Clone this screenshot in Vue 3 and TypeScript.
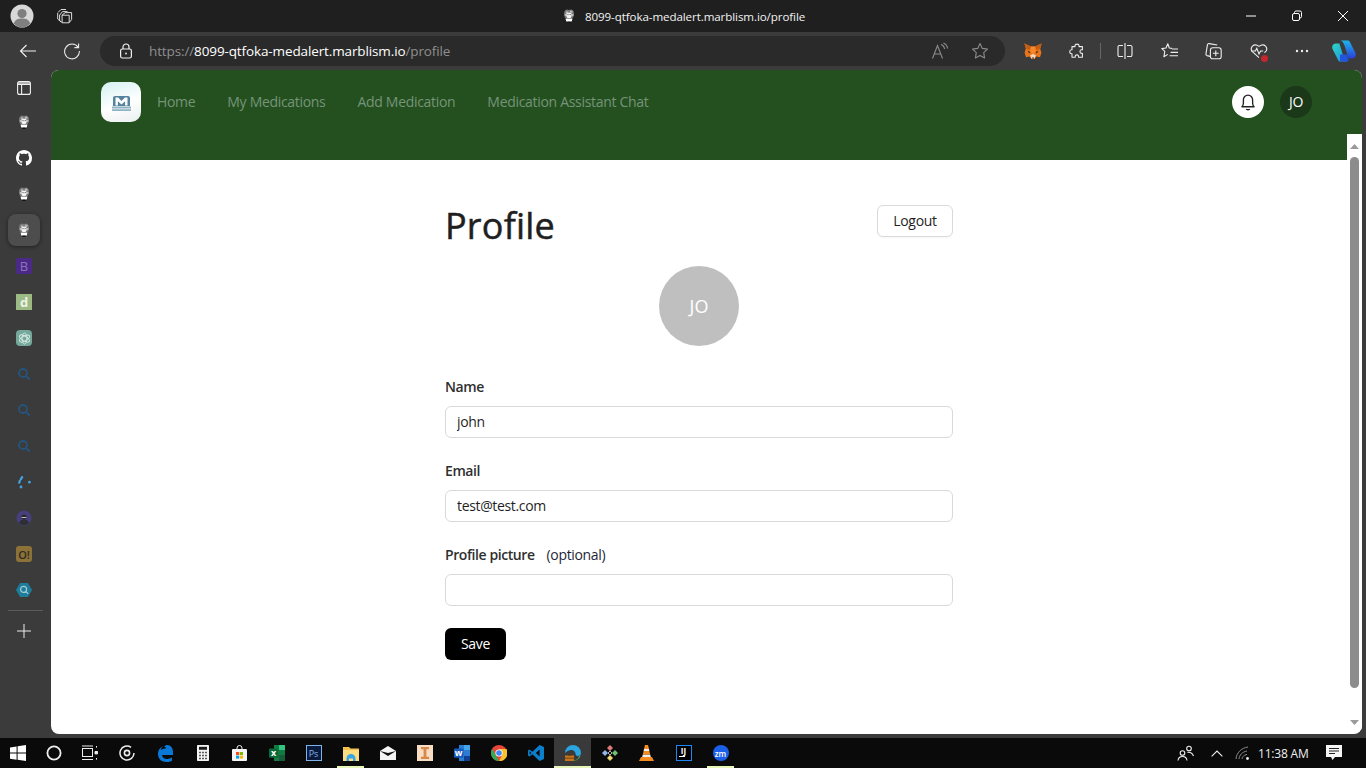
<script setup lang="ts">
const navLinks = ['Home', 'My Medications', 'Add Medication', 'Medication Assistant Chat']

const searchTabs = [0, 1, 2]
</script>

<template>
  <div class="desktop">
    <svg class="defs" width="0" height="0">
      <symbol id="bust" viewBox="0 0 12 14">
        <path d="M1.500 2 3.500.5 6 1 8.500.5 10.500 2l.5 3-.6 3-1 1.200.4 1.800H2.200l.4-1.800-1-1.200L1 5z" fill="#7c7c7c" />
        <path d="M3 2.500h2v2H3zM7 1.800h2.400v2H7zM1.800 5h1.600v2H1.800zM8.800 5h1.600v2H8.800z" fill="#bdbdbd" />
        <path d="M3.600 4.200 6 3.400l2.400.8.3 2.800L7.600 9H4.400L3.300 7z" fill="#f2f2f2" />
        <path d="M4.400 5.600h1.200M6.600 5.600h1.200" stroke="#555" stroke-width=".9" />
        <path d="M3 9.800h6v1.600l-1 1.600H4l-1-1.600z" fill="#fff" />
        <path d="M4.200 12.400h3.600V14H4.200z" fill="#161616" />
      </symbol>
      <symbol id="search-dim" viewBox="0 0 14 14">
        <circle cx="6" cy="6" r="4" fill="none" stroke="#25547d" stroke-width="1.800" />
        <path d="m9 9 3.800 3.600" stroke="#25547d" stroke-width="1.800" />
      </symbol>
    </svg>

    <!-- title bar -->
    <div class="titlebar">
      <div class="title-left">
        <svg class="profile-pic" width="24" height="24" viewBox="0 0 24 24">
          <circle cx="12" cy="12" r="11.5" fill="#d8d8d8" />
          <circle cx="12" cy="9.500" r="4.600" fill="#7f7f7f" />
          <path d="M3.800 19.500C5 15.800 8 14.600 12 14.600s7 1.200 8.200 4.900A11.400 11.400 0 0 1 12 23.500a11.400 11.400 0 0 1-8.200-4z" fill="#7f7f7f" />
        </svg>
        <svg width="18" height="18" viewBox="0 0 18 18" fill="none" stroke="#dcdcdc" stroke-width="1">
          <path d="M2 5.500 5 2.500h5M3.700 8 6.500 4.600h5" />
          <path d="M1.700 6v6l3.600 3.200M3.600 8v5.200l2.400 2.400" />
          <path d="M6 8.200 9.200 5.600h6.400v7L13 15.800H6.200z M6 8.200h7.200v7.400" stroke-linejoin="round" />
        </svg>
      </div>
      <div class="title-center">
        <svg width="12" height="14"><use href="#bust" /></svg>
        <span>8099-qtfoka-medalert.marblism.io/profile</span>
      </div>
      <div class="window-controls">
        <svg width="46" height="32" viewBox="0 0 46 32"><path d="M18 16h10" stroke="#fff" /></svg>
        <svg width="46" height="32" viewBox="0 0 46 32" fill="none" stroke="#fff">
          <rect x="18.500" y="13.500" width="7" height="7" rx="1.500" />
          <path d="M20.500 13v-.5a1.500 1.500 0 0 1 1.500-1.500h4a1.500 1.500 0 0 1 1.500 1.500v4a1.500 1.500 0 0 1-1.500 1.500" />
        </svg>
        <svg width="46" height="32" viewBox="0 0 46 32"><path d="m18 11 10 10m0-10L18 21" stroke="#fff" /></svg>
      </div>
    </div>

    <!-- browser toolbar -->
    <div class="toolbar">
      <div class="nav-btns">
        <svg width="20" height="16" viewBox="0 0 20 16" fill="none" stroke="#f2f2f2" stroke-width="1.100">
          <path d="M18 8H2.500M8.500 2 2.500 8l6 6" />
        </svg>
        <svg width="18" height="18" viewBox="0 0 18 18" fill="none" stroke="#e8e8e8" stroke-width="1.100">
          <path d="M15.200 5.400A7.400 7.400 0 1 0 16.400 9" />
          <path d="M15.600 1.400v4.200h-4.200" />
        </svg>
      </div>
      <div class="address">
        <svg class="lock" width="14" height="16" viewBox="0 0 14 16" fill="none" stroke="#f0f0f0" stroke-width="1.200">
          <rect x="1.600" y="6" width="10.800" height="9" rx="1.800" />
          <path d="M4 6V4a3 3 0 0 1 6 0v2" />
          <circle cx="7" cy="10.500" r=".9" fill="#f0f0f0" stroke="none" />
        </svg>
        <span class="url"><span class="url-dim">https://</span>8099-qtfoka-medalert.marblism.io<span class="url-dim">/profile</span></span>
        <svg class="read-aloud" width="18" height="18" viewBox="0 0 18 18" fill="none" stroke="#8b8b8b" stroke-width="1.100">
          <path d="M1.500 16.500 6.500 3.500l5 13M3.200 12h6.600" />
          <path d="M10 2.500c2 .7 3.300 2.300 3.600 4.500M12.400 1c2.400 1 4 3 4.100 5.600" />
        </svg>
        <svg class="addr-star" width="18" height="18" viewBox="0 0 18 18" fill="none" stroke="#8b8b8b" stroke-width="1.100">
          <path d="m9 1.600 2.300 4.800 5.200.7-3.800 3.600.9 5.200L9 13.400l-4.600 2.500.9-5.200L1.500 7.100l5.200-.7z" stroke-linejoin="round" />
        </svg>
      </div>
      <div class="tool-icons">
        <svg class="fox" width="18" height="17" viewBox="0 0 18 17">
          <path d="M.4.400 7 3.600h4L17.600.400 16.200 5.400l1.200 4.400-1.400 4.400-3.600-.8-1.800 2.400H7.400l-1.800-2.400-3.600.8L.6 9.800 1.800 5.400z" fill="#e8741c" />
          <path d="M.4.400 7 3.600 5.400 7.200 1.800 5.400zM17.600.400 11 3.600l1.600 3.600 3.600-1.800z" fill="#c75d12" />
          <path d="M7 3.600h4l.6 5.400-2.600 2-2.600-2z" fill="#f68a2a" />
          <path d="m3.600 7.800 3 1.200-1.400 1.400zM14.400 7.800l-3 1.200 1.400 1.400z" fill="#4a2d14" />
          <path d="M6.200 12.200 9 11l2.800 1.200-1 3.400H7.200z" fill="#f3d6bb" />
          <path d="M7.800 14.600h2.400l-.5 1H8.300z" fill="#3a2a1c" />
        </svg>
        <svg class="puzzle" width="16" height="16" viewBox="0 0 16 16" fill="none" stroke="#eee" stroke-width="1.100">
          <path d="M6 2.600c0-2 4-2 4 0v1h3.400v3.200h-.8c-2.200 0-2.200 3.600 0 3.600h.8v3.800H9.600v-.8c0-2-3.400-2-3.400 0v.8H3V10.800h-.6c-2.200 0-2.200-4 0-4H3V3.600h3z" stroke-linejoin="round" />
        </svg>
        <span class="tool-sep"></span>
        <svg class="split" width="16" height="18" viewBox="0 0 16 18" fill="none" stroke="#eee" stroke-width="1.100">
          <path d="M6 3.500H2.400A1.400 1.400 0 0 0 1 4.900v8.200a1.400 1.400 0 0 0 1.400 1.400H6M10 3.500h3.600A1.400 1.400 0 0 1 15 4.900v8.200a1.400 1.400 0 0 1-1.400 1.400H10M8 1v16" />
        </svg>
        <svg class="favs" width="18" height="18" viewBox="0 0 18 18" fill="none" stroke="#eee" stroke-width="1.100">
          <path d="M11 6.400 8.300 6 6.800 1.800 5 6 .8 6.600l3 2.800-.9 5.400 3.900-2.400" stroke-linejoin="round" />
          <path d="M11 7h6M9.600 10.400H17M8.600 13.800H17" />
        </svg>
        <svg class="collect" width="18" height="18" viewBox="0 0 18 18" fill="none" stroke="#eee" stroke-width="1.100">
          <path d="M6 14.400 3 13.600a1.600 1.600 0 0 1-1-2L3.400 2.800A1.600 1.600 0 0 1 5.200 1.600l8 1.400" />
          <rect x="6.400" y="5.800" width="10.800" height="11" rx="2.400" />
          <path d="M11.800 8.400v5.800M8.900 11.300h5.800" />
        </svg>
        <span class="health">
          <svg width="18" height="16" viewBox="0 0 18 16" fill="none" stroke="#eee" stroke-width="1.100">
            <path d="M9 14.600 2.400 8.600C-.6 5.200 3.400-.6 9 3.400c5.600-4 9.600 1.800 6.600 5.200l-1.200 1.100" />
            <path d="M1 8h4.400l1.400-2.600L9 11l1.600-3h2.600" />
          </svg>
          <i class="health-dot"></i>
        </span>
        <svg class="dots" width="14" height="4" viewBox="0 0 14 4" fill="#eee">
          <circle cx="2" cy="2" r="1.200" /><circle cx="7" cy="2" r="1.200" /><circle cx="12" cy="2" r="1.200" />
        </svg>
        <svg class="copilot" width="24" height="22" viewBox="0 0 24 22">
          <defs>
            <linearGradient id="cp1" x1="0" y1="0" x2="1" y2="1">
              <stop offset="0" stop-color="#2ed8c0" /><stop offset="1" stop-color="#1a8be8" />
            </linearGradient>
            <linearGradient id="cp2" x1="0" y1="0" x2="0" y2="1">
              <stop offset="0" stop-color="#1fb5ee" /><stop offset="1" stop-color="#2a3fd8" />
            </linearGradient>
          </defs>
          <path d="M8.500 .4h7.200c1 0 1.800.6 2.200 1.600L23.500 13c.8 2.400 0 5.400-3.500 5.400h-3.400L13 7C12 3.400 10.800 1.200 8.500 .4z" fill="url(#cp2)" />
          <path d="M15.500 21.600H8.300c-1 0-1.800-.6-2.200-1.600L.5 9C-.3 6.600.5 3.600 4 3.600h3.400L11 15c1 3.600 2.200 5.800 4.500 6.600z" fill="url(#cp1)" />
          <path d="M8 14.400h7l1.600 6.400-1 .8H9l-1-.8z" fill="#2354dc" />
        </svg>
      </div>
    </div>

    <div class="middle">
      <!-- edge vertical tabs -->
      <aside class="sidebar">
        <div class="side-item side-first">
          <svg width="14" height="14" viewBox="0 0 14 14" fill="none" stroke="#f0f0f0" stroke-width="1.100">
            <rect x=".6" y=".6" width="12.800" height="12.800" rx="2" />
            <path d="M.6 3.400h12.800M4.600 3.400v10" />
            <path d="M1 1h12v2.400H1z" fill="#f0f0f0" stroke="none" opacity=".55" />
          </svg>
        </div>
        <div class="side-item"><svg width="12" height="14"><use href="#bust" /></svg></div>
        <div class="side-item">
          <svg width="16" height="16" viewBox="0 0 16 16" fill="#fff">
            <path d="M8 0C3.580 0 0 3.580 0 8c0 3.540 2.290 6.530 5.470 7.590.4.070.55-.17.55-.38 0-.19-.01-.82-.01-1.490-2.010.37-2.530-.49-2.690-.94-.09-.23-.48-.94-.82-1.130-.28-.15-.68-.52-.01-.53.63-.01 1.080.58 1.230.82.72 1.210 1.870.87 2.330.66.070-.52.28-.87.51-1.070-1.780-.2-3.640-.89-3.640-3.950 0-.87.31-1.590.82-2.150-.08-.2-.36-1.020.08-2.120 0 0 .67-.21 2.200.82.64-.18 1.320-.27 2-.27s1.360.09 2 .27c1.530-1.040 2.200-.82 2.200-.82.44 1.100.16 1.920.08 2.120.51.56.82 1.270.82 2.150 0 3.070-1.870 3.750-3.650 3.950.29.25.54.73.54 1.480 0 1.070-.01 1.930-.01 2.200 0 .21.15.46.55.38A8.010 8.010 0 0 0 16 8c0-4.420-3.580-8-8-8z" />
          </svg>
        </div>
        <div class="side-item"><svg width="12" height="14"><use href="#bust" /></svg></div>
        <div class="side-item">
          <div class="side-active"><svg width="12" height="14"><use href="#bust" /></svg></div>
        </div>
        <div class="side-item"><span class="fav fav-b">B</span></div>
        <div class="side-item"><span class="fav fav-d">d</span></div>
        <div class="side-item">
          <span class="fav fav-ai">
            <svg width="13" height="13" viewBox="0 0 13 13" fill="none" stroke="#d6e8e2" stroke-width=".9">
              <ellipse cx="6.500" cy="6.500" rx="2.400" ry="5.600" />
              <ellipse cx="6.500" cy="6.500" rx="2.400" ry="5.600" transform="rotate(60 6.500 6.500)" />
              <ellipse cx="6.500" cy="6.500" rx="2.400" ry="5.600" transform="rotate(120 6.500 6.500)" />
            </svg>
          </span>
        </div>
        <div v-for="i in searchTabs" :key="i" class="side-item">
          <svg width="14" height="14"><use href="#search-dim" /></svg>
        </div>
        <div class="side-item">
          <svg width="16" height="16" viewBox="0 0 16 16" fill="#46a0e0">
            <circle cx="5" cy="5" r="1.300" /><circle cx="3.800" cy="7" r="1.200" /><circle cx="6" cy="3.200" r="1.200" />
            <circle cx="3.200" cy="8.600" r="1.200" /><circle cx="5" cy="13" r="1.400" /><circle cx="13.400" cy="8.200" r="1.400" />
          </svg>
        </div>
        <div class="side-item">
          <svg width="16" height="16" viewBox="0 0 16 16">
            <circle cx="8" cy="8" r="7.500" fill="#46407e" />
            <path d="M3 13c1-3 3-3.600 5-3.600s4 .6 5 3.600a7.400 7.400 0 0 1-10 0z" fill="#2d2d33" />
            <circle cx="8" cy="7" r="2.600" fill="#2a2a2e" />
            <path d="M5.600 7h4.800v1H5.600z" fill="#bbb" />
          </svg>
        </div>
        <div class="side-item"><span class="fav fav-o">O!</span></div>
        <div class="side-item">
          <svg width="16" height="14" viewBox="0 0 16 14">
            <path d="M4 0h8l4 7-4 7H4L0 7z" fill="#1d7d9b" />
            <circle cx="7.600" cy="6.400" r="3" fill="none" stroke="#a6cad6" stroke-width="1.200" />
            <path d="m9.800 8.600 2.400 2.200" stroke="#a6cad6" stroke-width="1.200" />
          </svg>
        </div>
        <div class="side-rule"></div>
        <div class="side-plus">
          <svg width="14" height="14" viewBox="0 0 14 14"><path d="M7 0v14M0 7h14" stroke="#eee" stroke-width="1" /></svg>
        </div>
      </aside>

      <!-- web page -->
      <div class="page">
        <header class="app-header">
          <div class="logo">
            <svg width="19" height="15" viewBox="0 0 19 15">
              <path d="M1 2a2 2 0 0 1 2-2h13a2 2 0 0 1 2 2v8H1z" fill="#55839f" />
              <path d="M3.500 9.500V1.500h2.600L9.500 5l3.400-3.500h2.600v8h-2.400V5.200L9.500 8.400 5.900 5.200v4.300z" fill="#fff" />
              <path d="M0 10.600h19v1.800H0zM0 13.200h19V15H0z" fill="#8fb2c4" />
            </svg>
          </div>
          <nav class="nav">
            <a v-for="link in navLinks" :key="link" class="nav-link">{{ link }}</a>
          </nav>
          <div class="header-right">
            <div class="bell">
              <svg width="18" height="18" viewBox="0 0 16 16" fill="none" stroke="#222" stroke-width="1.200">
                <path d="M2.600 12.200c1-1 1.300-2 1.300-3.400V6a4.100 4.100 0 0 1 8.200 0v2.800c0 1.400.3 2.400 1.300 3.400z" stroke-linejoin="round" />
                <path d="M6.400 14.200c.5.9 2.700.9 3.200 0" />
              </svg>
            </div>
            <div class="user-chip">JO</div>
          </div>
        </header>

        <main class="content">
          <div class="profile">
            <div class="profile-head">
              <h1 class="profile-title">Profile</h1>
              <button class="logout" type="button">Logout</button>
            </div>
            <div class="avatar-row">
              <div class="avatar">JO</div>
            </div>
            <form class="form" @submit.prevent>
              <div class="field">
                <label class="label">Name</label>
                <input class="input" type="text" value="john" />
              </div>
              <div class="field">
                <label class="label">Email</label>
                <input class="input" type="text" value="test@test.com" />
              </div>
              <div class="field">
                <label class="label">Profile picture<span class="optional">(optional)</span></label>
                <input class="input" type="text" value="" />
              </div>
              <button class="save" type="submit">Save</button>
            </form>
          </div>
        </main>

        <!-- page scrollbar sits over the header -->
        <div class="scrollbar">
          <svg width="9" height="5" viewBox="0 0 9 5"><path d="M4.500 0 9 5H0z" fill="#9a9a9a" /></svg>
          <div class="thumb"></div>
          <svg class="arrow-down" width="9" height="5" viewBox="0 0 9 5"><path d="M4.500 5 9 0H0z" fill="#9a9a9a" /></svg>
        </div>
      </div>
    </div>

    <!-- windows taskbar -->
    <footer class="taskbar">
      <div class="task-start">
        <svg width="16" height="16" viewBox="0 0 16 16" fill="#fff">
          <path d="M0 2.400 6.600 1.400v6.200H0zM7.600 1.200 16 0v7.600H7.600zM0 8.600h6.600v6.100L0 13.700zM7.600 8.600H16V16l-8.400-1.200z" />
        </svg>
      </div>
      <div class="task-cell task-narrow">
        <svg width="16" height="16" viewBox="0 0 16 16"><circle cx="8" cy="8" r="6.600" fill="none" stroke="#eee" stroke-width="1.800" /></svg>
      </div>
      <div class="task-cell task-narrow">
        <svg width="16" height="16" viewBox="0 0 16 16" fill="none" stroke="#eee" stroke-width="1">
          <rect x=".5" y="3.500" width="10" height="8" /><path d="M0 1h11M0 14.500h11M14.500 1v1.600M14.500 13v1.600" />
          <path d="M13 6.500h2.600v2.400H13z" fill="#eee" />
        </svg>
      </div>
      <div class="task-cell task-wide">
        <svg width="16" height="16" viewBox="0 0 16 16" fill="none" stroke="#eee">
          <path d="M15 8a7 7 0 1 1-3-5.700" stroke-width="1.500" /><circle cx="8" cy="8" r="2.600" stroke-width="1.600" />
        </svg>
      </div>
      <div class="task-cell task-wide">
        <svg width="16" height="17" viewBox="0 0 16 17">
          <path d="M16 10H5c.3 2.600 2.400 4 5 4 2 0 3.600-.5 5-1.400v3.200c-1.400.8-3.200 1.200-5.400 1.200-5 0-8.600-3-8.600-8 0-4 2.300-6.800 5.400-8C4.800 2 4 3.400 3.800 5c1.200-1 3-1.600 5-1.600 .4-1.200-.4-1.400-1.600-1.400C8 .5 9 0 10 0c4 0 6 3.200 6 7.500z" fill="#0a78d7" />
        </svg>
      </div>
      <div class="task-cell">
        <svg width="12" height="16" viewBox="0 0 12 16">
          <rect width="12" height="16" rx=".8" fill="#f4f4f4" />
          <path d="M2 1.800h8v3H2z" fill="#1b1b1b" />
          <path d="M2.200 6.800h1.600v1.400H2.200zm3 0h1.600v1.400H5.200zm3 0h1.600v1.400H8.200zM2.200 9.800h1.600v1.400H2.200zm3 0h1.600v1.400H5.200zm3 0h1.600v1.400H8.200zM2.200 12.800h1.600v1.400H2.200zm3 0h1.600v1.400H5.200zm3 0h1.600v1.400H8.200z" fill="#333" />
        </svg>
      </div>
      <div class="task-cell">
        <svg width="15" height="16" viewBox="0 0 15 16">
          <path d="M5 4.500V3a2.500 2.500 0 0 1 5 0v1.500" fill="none" stroke="#eee" />
          <rect y="4" width="15" height="12" rx="1" fill="#f6f6f6" />
          <path d="M4 7h3.200v3H4z" fill="#f25022" /><path d="M7.800 7H11v3H7.800z" fill="#7fba00" />
          <path d="M4 10.600h3.200v3H4z" fill="#00a4ef" /><path d="M7.800 10.600H11v3H7.800z" fill="#ffb900" />
        </svg>
      </div>
      <div class="task-cell">
        <svg width="16" height="16" viewBox="0 0 16 16">
          <path d="M5 0h10a1 1 0 0 1 1 1v14a1 1 0 0 1-1 1H5z" fill="#107c41" />
          <path d="M10 0h5a1 1 0 0 1 1 1v4h-6z" fill="#33c481" /><path d="M10 10h6v5a1 1 0 0 1-1 1h-5z" fill="#185c37" />
          <rect y="3.400" width="9.400" height="9.400" rx=".8" fill="#0b6a38" />
          <text x="4.700" y="11" class="x-text">x</text>
        </svg>
      </div>
      <div class="task-cell">
        <span class="ps-tile">Ps</span>
      </div>
      <div class="task-cell task-open">
        <svg width="16" height="15" viewBox="0 0 16 15">
          <path d="M0 1h6l1.600 1.600H16V5H0z" fill="#f2c14e" /><path d="M0 4h16v11H0z" fill="#fbdc7f" />
          <path d="M3.500 12.500a4.500 4.500 0 0 1 9 0V15H10v-2.500H6V15H3.500z" fill="#35a4e8" />
        </svg>
      </div>
      <div class="task-cell">
        <svg width="16" height="14" viewBox="0 0 16 14">
          <path d="M0 5 8 0l8 5v9H0z" fill="#f5f5f5" /><path d="M0 5 8 10l8-5L8 7z" fill="#111" />
        </svg>
      </div>
      <div class="task-cell">
        <span class="ingot">
          <svg width="8" height="12" viewBox="0 0 8 12"><path d="M0 0h8v2.200H5.400v7.600H8V12H0V9.800h2.600V2.200H0z" fill="#d8894a" /></svg>
        </span>
      </div>
      <div class="task-cell">
        <svg width="16" height="16" viewBox="0 0 16 16">
          <path d="M5 0h10a1 1 0 0 1 1 1v14a1 1 0 0 1-1 1H5z" fill="#2b7cd3" />
          <path d="M10 0h5a1 1 0 0 1 1 1v4h-6z" fill="#41a5ee" /><path d="M10 11h6v4a1 1 0 0 1-1 1h-5z" fill="#103f91" />
          <rect y="3.400" width="9.400" height="9.400" rx=".8" fill="#185abd" />
          <text x="4.700" y="11" class="x-text">w</text>
        </svg>
      </div>
      <div class="task-cell">
        <svg width="16" height="16" viewBox="0 0 16 16">
          <circle cx="8" cy="8" r="8" fill="#e8453c" />
          <path d="M8 4h7.500A8 8 0 0 1 8 16l3.500-6.500z" fill="#fbc02d" />
          <path d="M1.200 3.800 4.800 10 8 16A8 8 0 0 1 1.200 3.800z" fill="#34a853" />
          <circle cx="8" cy="8" r="3.600" fill="#fff" /><circle cx="8" cy="8" r="2.800" fill="#4285f4" />
        </svg>
      </div>
      <div class="task-cell">
        <svg width="16" height="16" viewBox="0 0 16 16">
          <path d="M11.600 0 16 2v12l-4.400 2L4.400 9.200 1.500 11.400 0 10.600V5.400l1.500-.8 2.900 2.200zM11.600 4.600 7.800 8l3.800 3.400zM1.600 6.200v3.600L3.400 8z" fill="#0b7fcc" />
        </svg>
      </div>
      <div class="task-cell task-active">
        <svg width="16" height="16" viewBox="0 0 16 16">
          <path d="M0 8a8 8 0 0 1 16 0c0 1.500-1 3-3 3-1.600 0-2.400-.8-2.400-2 0-2.500-2.600-4.600-5-4C3 5.600 1 7 0 8z" fill="#2aa5e0" />
          <path d="M16 8c-.2 4.500-4 8-8 8 3.600-.5 5.800-2.500 5.800-4.500 1.200 0 2.200-1.700 2.200-3.500z" fill="#5bd06a" />
          <path d="M0 10.500h9V16H0z" fill="#c8741e" /><path d="M3 9.500h3v1H3zM0 12.800h9v.8H0z" fill="#5a3207" />
        </svg>
      </div>
      <div class="task-cell">
        <svg width="16" height="16" viewBox="0 0 16 16">
          <path d="M8 0 11 3 8 6 5 3z" fill="#e07a7a" /><path d="M13 5l3 3-3 3-3-3z" fill="#6fbf73" />
          <path d="M8 10l3 3-3 3-3-3z" fill="#f0d878" /><path d="M3 5l3 3-3 3-3-3z" fill="#8fb7ea" />
          <path d="m8 6 2 2-2 2-2-2z" fill="none" stroke="#eee" stroke-width=".7" />
        </svg>
      </div>
      <div class="task-cell">
        <svg width="15" height="16" viewBox="0 0 15 16">
          <path d="M6 0h3l1 4H5zM4.600 6h5.800l.9 3.800H3.700z" fill="#f58a1f" /><path d="M5 4h5l.4 2H4.600zM3.700 9.800h7.600l.5 2.200H3.200z" fill="#eee" />
          <path d="M2 12h11l2 4H0z" fill="#f58a1f" />
        </svg>
      </div>
      <div class="task-cell">
        <span class="ij-tile"><span>IJ</span><i></i></span>
      </div>
      <div class="task-cell task-open">
        <span class="zoom-tile">zm</span>
      </div>

      <div class="tray">
        <svg class="tray-people" width="18" height="16" viewBox="0 0 18 16" fill="none" stroke="#eee" stroke-width="1.100">
          <circle cx="5.500" cy="8" r="2.300" /><path d="M1 15.500c.3-2.600 2-4 4.500-4s4.200 1.400 4.500 4" />
          <circle cx="12" cy="3.500" r="2.300" /><path d="M10.500 7.500c2-.6 5 .2 6 3.500" />
        </svg>
        <svg class="tray-caret" width="12" height="7" viewBox="0 0 12 7" fill="none" stroke="#eee" stroke-width="1.100"><path d="M.6 6.400 6 1l5.400 5.400" /></svg>
        <svg class="tray-wifi" width="16" height="14" viewBox="0 0 16 14" fill="none" stroke="#8a8a8a" stroke-width="1">
          <path d="M1 13C1.500 7 6 2 13 1M4 13c.5-4 3-7 8-8M7 13c.3-2 1.500-4 5-4.600" /><circle cx="12.500" cy="12.500" r="1.400" fill="#eee" stroke="none" />
        </svg>
        <span class="clock">11:38 AM</span>
        <svg class="tray-note" width="17" height="16" viewBox="0 0 17 16">
          <path d="M0 0h16v12H9l-2.500 3L5 12H0z" fill="#f5f5f5" />
          <path d="M3 3.500h10M3 6h10M3 8.500h6" stroke="#222" stroke-width="1" />
        </svg>
      </div>
    </footer>
  </div>
</template>

<style scoped>
.desktop {
  width: 1366px;
  height: 768px;
  display: flex;
  flex-direction: column;
  overflow: hidden;
  background: #3b3b3b;
  font-family: "Open Sans", "Noto Sans", sans-serif;
}

.defs {
  position: absolute;
}

/* title bar */
.titlebar {
  height: 32px;
  flex: none;
  display: flex;
  align-items: center;
  position: relative;
  background: #1f1f1f;
}
.title-left {
  display: flex;
  align-items: center;
  gap: 22px;
  padding-left: 10px;
}
.title-center {
  display: flex;
  align-items: center;
  gap: 10px;
  margin-left: 489px;
  color: #f2f2f2;
  font-size: 11.6px;
  letter-spacing: -0.1px;
}
.window-controls {
  display: flex;
  margin-left: auto;
  padding-right: 0;
}

/* toolbar */
.toolbar {
  height: 38px;
  flex: none;
  display: flex;
  align-items: flex-start;
  padding-top: 4px;
  box-sizing: border-box;
}
.nav-btns {
  width: 100px;
  height: 30px;
  flex: none;
  display: flex;
  align-items: center;
  gap: 25px;
  padding-left: 18px;
  box-sizing: border-box;
}
.address {
  width: 905px;
  height: 30px;
  flex: none;
  display: flex;
  align-items: center;
  background: #2a2a2a;
  border-radius: 15px;
  padding-left: 19px;
  box-sizing: border-box;
}
.url {
  margin-left: 16px;
  font-size: 13.5px;
  color: #fff;
  letter-spacing: -0.12px;
}
.url-dim {
  color: #8f8f8f;
}
.read-aloud {
  margin-left: auto;
}
.addr-star {
  margin: 0 16px 0 22px;
}
.tool-icons {
  height: 30px;
  display: flex;
  align-items: center;
  flex: 1;
}
.fox { margin-left: 19px; }
.puzzle { margin-left: 27px; }
.tool-sep {
  width: 1px;
  height: 16px;
  margin-left: 15px;
  background: #666;
}
.split { margin-left: 16px; }
.favs { margin-left: 28px; }
.collect { margin-left: 25px; }
.health {
  position: relative;
  display: flex;
  margin-left: 28px;
}
.health-dot {
  position: absolute;
  right: 0;
  bottom: -3px;
  width: 7px;
  height: 7px;
  border-radius: 50%;
  background: #c4262e;
}
.dots { margin-left: 27px; }
.copilot { margin-left: 23px; }

/* middle */
.middle {
  flex: 1;
  min-height: 0;
  display: flex;
}
.sidebar {
  width: 51px;
  flex: none;
  display: flex;
  flex-direction: column;
}
.side-item {
  height: 36px;
  flex: none;
  display: flex;
  align-items: center;
  justify-content: center;
  padding-right: 3px;
}
.side-first {
  height: 34px;
  padding-top: 2px;
  box-sizing: border-box;
}
.side-active {
  width: 32px;
  height: 32px;
  display: flex;
  align-items: center;
  justify-content: center;
  border-radius: 8px;
  background: #4d4d4d;
  box-shadow: 0 1px 4px rgba(0, 0, 0, 0.45);
}
.fav {
  width: 16px;
  height: 16px;
  display: flex;
  align-items: center;
  justify-content: center;
  font-size: 13px;
  line-height: 1;
}
.fav-b { background: #4b2a87; color: #8e72b8; border-radius: 2px; }
.fav-d { background: #9cba84; color: #eef3e8; font-weight: 700; }
.fav-ai { background: #73a89b; border-radius: 4px; }
.fav-o {
  background: #8c7236;
  color: #2c2a25;
  border-radius: 3px;
  font-size: 11px;
  font-weight: 600;
}
.side-rule {
  height: 1px;
  margin: 2px 8px 0;
  background: #5c5c5c;
}
.side-plus {
  height: 40px;
  display: flex;
  align-items: center;
  justify-content: center;
  padding-right: 3px;
}

/* page */
.page {
  width: 1311px;
  height: 664px;
  margin-top: 0;
  position: relative;
  display: flex;
  flex-direction: column;
  background: #fff;
  border-radius: 8px;
  overflow: hidden;
}
.app-header {
  height: 90px;
  flex: none;
  display: flex;
  align-items: flex-start;
  padding: 12px 50px 0;
  box-sizing: border-box;
  background: #23501e;
}
.logo {
  width: 40px;
  height: 40px;
  flex: none;
  display: flex;
  align-items: center;
  justify-content: center;
  padding-top: 2px;
  box-sizing: border-box;
  border-radius: 10px;
  background: linear-gradient(160deg, #d4f0f2 0%, #ffffff 55%, #e9eeee 100%);
}
.nav {
  height: 40px;
  display: flex;
  align-items: center;
  gap: 32px;
  margin-left: 16px;
  padding-bottom: 2px;
  box-sizing: border-box;
}
.nav-link {
  font-size: 14px;
  letter-spacing: -0.31px;
  color: #76937a;
}
.header-right {
  margin-left: auto;
  display: flex;
  align-items: center;
  gap: 16px;
  height: 40px;
}
.bell {
  width: 32px;
  height: 32px;
  display: flex;
  align-items: center;
  justify-content: center;
  border-radius: 50%;
  background: #fff;
}
.user-chip {
  width: 32px;
  height: 32px;
  display: flex;
  align-items: center;
  justify-content: center;
  padding-bottom: 2px;
  box-sizing: border-box;
  border-radius: 50%;
  background: #1b3818;
  color: #fff;
  font-size: 14px;
  letter-spacing: -0.3px;
}

.content {
  flex: 1;
  display: flex;
  justify-content: center;
  padding-right: 15px;
}
.profile {
  width: 508px;
  padding-top: 45px;
}
.profile-head {
  height: 61px;
  display: flex;
  justify-content: space-between;
  align-items: flex-start;
}
.profile-title {
  margin: -3px 0 0;
  font-size: 36px;
  line-height: 48px;
  font-weight: 400;
  letter-spacing: 0.2px;
  -webkit-text-stroke: 0.5px #1f1f1f;
  color: #1f1f1f;
}
.logout {
  width: 76px;
  height: 32px;
  padding: 0 0 2px;
  font: inherit;
  font-size: 14px;
  letter-spacing: -0.3px;
  color: #1f1f1f;
  background: #fff;
  border: 1px solid #d9d9d9;
  border-radius: 6px;
  box-shadow: 0 2px 0 rgba(0, 0, 0, 0.02);
}
.avatar-row {
  display: flex;
  justify-content: center;
  margin-bottom: 30px;
}
.avatar {
  width: 80px;
  height: 80px;
  display: flex;
  align-items: center;
  justify-content: center;
  border-radius: 50%;
  background: #bfbfbf;
  color: #fff;
  font-size: 18px;
}
.form {
  display: flex;
  flex-direction: column;
}
.field {
  display: flex;
  flex-direction: column;
  gap: 8px;
  margin-bottom: 22px;
}
.label {
  height: 22px;
  line-height: 22px;
  font-size: 14px;
  font-weight: 600;
  letter-spacing: -0.42px;
  color: #2f2f2f;
}
.optional {
  margin-left: 12px;
  font-weight: 400;
  letter-spacing: -0.35px;
  color: #1f1f3a;
}
.input {
  height: 32px;
  padding: 0 11px 2px;
  box-sizing: border-box;
  font: inherit;
  font-size: 14px;
  letter-spacing: -0.34px;
  color: #1f1f1f;
  background: #fff;
  border: 1px solid #d9d9d9;
  border-radius: 6px;
  outline: none;
}
.save {
  width: 61px;
  height: 32px;
  padding: 0 0 2px;
  font: inherit;
  font-size: 14px;
  letter-spacing: -0.3px;
  color: #fff;
  background: #000;
  border: none;
  border-radius: 6px;
}

.scrollbar {
  position: absolute;
  top: 64px;
  right: 0;
  bottom: 4px;
  width: 15px;
  display: flex;
  flex-direction: column;
  align-items: center;
  gap: 8px;
  padding: 10px 0 5px;
  box-sizing: border-box;
  background: #fff;
}
.thumb {
  flex: none;
  height: 531px;
  width: 9px;
  border-radius: 5px;
  background: #8c8c8c;
}
.arrow-down {
  margin-top: auto;
}

/* taskbar */
.taskbar {
  height: 30px;
  flex: none;
  display: flex;
  align-items: center;
  margin-top: 4px;
  background: #0a0a0a;
  color: #eee;
}
.task-start {
  width: 36px;
  height: 30px;
  flex: none;
  display: flex;
  align-items: center;
  justify-content: center;
}
.task-cell {
  width: 37px;
  height: 30px;
  flex: none;
  display: flex;
  align-items: center;
  justify-content: center;
  position: relative;
}
.task-narrow { width: 36px; }
.task-wide { width: 38px; }
.task-open::after,
.task-active::after {
  content: "";
  position: absolute;
  left: 5px;
  right: 5px;
  bottom: 0;
  height: 2px;
  background: #e6f5b8;
}
.task-active {
  background: #3a3a3a;
}
.task-active::after {
  left: 0;
  right: 0;
}
.x-text {
  fill: #fff;
  font-size: 9px;
  font-weight: 700;
  text-anchor: middle;
}
.ps-tile {
  width: 14px;
  height: 14px;
  display: flex;
  align-items: center;
  justify-content: center;
  border: 1px solid #7fb3ec;
  background: #0a1a3c;
  color: #7fb3ec;
  font-size: 9px;
}
.ingot {
  width: 16px;
  height: 16px;
  display: flex;
  align-items: center;
  justify-content: center;
  background: #f9dcc4;
}
.ij-tile {
  width: 14px;
  height: 14px;
  display: flex;
  flex-direction: column;
  align-items: center;
  border: 1px solid #1e88f0;
  background: #000;
  color: #fff;
  font-size: 8px;
  line-height: 10px;
  font-weight: 700;
}
.ij-tile i {
  width: 6px;
  height: 1px;
  margin-right: 4px;
  background: #fff;
}
.zoom-tile {
  width: 16px;
  height: 16px;
  display: flex;
  align-items: center;
  justify-content: center;
  border-radius: 50%;
  background: #1a5fe8;
  color: #fff;
  font-size: 8px;
  font-weight: 600;
}
.tray {
  flex: 1;
  display: flex;
  align-items: center;
  height: 30px;
  padding-left: 438px;
}
.tray-caret { margin-left: 16px; }
.tray-wifi { margin-left: 12px; }
.clock {
  margin-left: 7px;
  font-size: 12px;
  letter-spacing: -0.2px;
  color: #eee;
  white-space: nowrap;
}
.tray-note { margin-left: 17px; }
</style>

<style>
html,
body {
  margin: 0;
  background: #3b3b3b;
}
</style>
